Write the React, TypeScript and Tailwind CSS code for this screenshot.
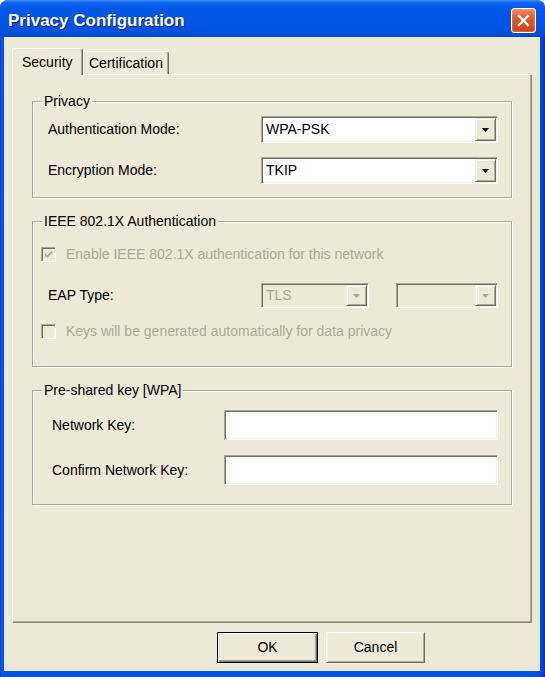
import React from 'react';

const sunken =
  'border border-t-[#aca899] border-l-[#aca899] border-r-white border-b-white shadow-[inset_1px_1px_0_#716f64,inset_-1px_-1px_0_#f1efe2]';

const DropButton: React.FC<{ disabled?: boolean }> = ({ disabled }) => (
  <div className="w-[21px] my-[1px] mr-[1px] shrink-0 bg-[#ece9d8] border border-t-[#f1efe2] border-l-[#f1efe2] border-r-[#716f64] border-b-[#716f64] shadow-[inset_1px_1px_0_#fff,inset_-1px_-1px_0_#aca899] flex items-center justify-center">
    <svg width="7" height="4" viewBox="0 0 7 4">
      <path d="M0 0h7L3.5 4z" fill={disabled ? '#aca899' : '#000'} />
    </svg>
  </div>
);

const Combo: React.FC<{ value: string; disabled?: boolean; className?: string }> = ({
  value,
  disabled,
  className = '',
}) => (
  <div
    className={`flex items-stretch ${sunken} ${
      disabled ? 'bg-[#ece9d8] text-[#aca899]' : 'bg-white text-black'
    } ${className}`}
  >
    <span className="flex-1 flex items-center pl-[4px] text-[14px]">{value}</span>
    <DropButton disabled={disabled} />
  </div>
);

const CheckBox: React.FC<{ checked?: boolean }> = ({ checked }) => (
  <div className={`w-[15px] h-[15px] shrink-0 bg-[#ece9d8] flex items-center justify-center ${sunken}`}>
    {checked && (
      <svg width="9" height="9" viewBox="0 0 9 9">
        <path d="M1 4.2l2.4 2.4L8 1.6" stroke="#aca899" strokeWidth="2" fill="none" />
      </svg>
    )}
  </div>
);

// etched group box; padding lives on the inner div so the legend stays put
const Group: React.FC<{ title: string; className?: string; inner: string; children: React.ReactNode }> = ({
  title,
  className = '',
  inner,
  children,
}) => (
  <fieldset
    className={`border border-[#aca899] shadow-[1px_1px_0_#fff,inset_1px_1px_0_#fff] ${className}`}
  >
    <legend className="ml-[9px] px-[2px] bg-[#ece9d8] text-[14px] leading-[16px] text-black">
      {title}
    </legend>
    <div className={inner}>{children}</div>
  </fieldset>
);

export default function App() {
  return (
    <div className="w-[545px] h-[677px] flex flex-col bg-[linear-gradient(to_right,#0a3fd8_0px,#0058ee_2px,#0054e3_4px,#0054e3_538px,#0046d4_542px,#0a2fc0_545px)] rounded-t-[8px] overflow-hidden font-['Liberation_Sans',Arial,sans-serif] select-none">
      {/* title bar */}
      <div className="h-[37px] shrink-0 flex items-center justify-between pl-[8px] pr-[9px] pt-[4px] bg-[linear-gradient(to_bottom,#3d8ef8_0px,#0a62ee_3px,#0058e6_8px,#0054e3_26px,#0050da_34px,#0048cc_37px)]">
        <span className="text-white font-bold text-[17px] leading-none [text-shadow:1px_1px_0_#0a1e8a]">
          Privacy Configuration
        </span>
        <div className="w-[25px] h-[25px] rounded-[3px] border border-white bg-[linear-gradient(to_bottom,#f08a62,#e25a2c_40%,#cc4317)] flex items-center justify-center shadow-[inset_0_0_2px_#ffb89a]">
          <svg width="13" height="13" viewBox="0 0 13 13">
            <path d="M2 2l9 9M11 2l-9 9" stroke="#fff" strokeWidth="2.4" strokeLinecap="square" />
          </svg>
        </div>
      </div>

      {/* body */}
      <div className="flex-1 ml-[4px] mr-[5px] mb-[6px] bg-[#ece9d8] flex flex-col px-[8px] pt-[11px]">
        {/* tabs */}
        <div className="h-[26px] flex items-end text-[14px] text-black">
          <div className="relative z-10 w-[71px] h-[27px] -mb-px bg-[#ece9d8] border-t border-l border-r border-t-white border-l-white border-r-[#716f64] rounded-t-[3px] shadow-[inset_-1px_0_0_#aca899] flex items-center pl-[9px]">
            Security
          </div>
          <div className="w-[86px] h-[23px] bg-[#ece9d8] border-t border-r border-t-white border-r-[#716f64] rounded-tr-[3px] shadow-[inset_-1px_0_0_#aca899] flex items-center pl-[6px]">
            Certification
          </div>
        </div>

        {/* panel */}
        <div className="h-[549px] shrink-0 border border-t-white border-l-white border-r-[#8d8a7c] border-b-[#8d8a7c] shadow-[inset_-1px_-1px_0_#aca899] px-[19px] pt-[18px] flex flex-col text-[14px] text-black">
          <Group title="Privacy" inner="flex flex-col gap-[14px] pl-[15px] pr-[13px] pt-[7px] pb-[13px]">
            <div className="flex items-center">
              <span className="w-[213px]">Authentication Mode:</span>
              <Combo value="WPA-PSK" className="flex-1 h-[27px]" />
            </div>
            <div className="flex items-center">
              <span className="w-[213px]">Encryption Mode:</span>
              <Combo value="TKIP" className="flex-1 h-[27px]" />
            </div>
          </Group>

          <Group
            title="IEEE 802.1X Authentication"
            className="mt-[15px]"
            inner="pl-[8px] pr-[13px] pt-[18px] pb-[27px]"
          >
            <div className="h-[15px] flex items-center gap-[10px] text-[#aca899]">
              <CheckBox checked />
              <span className="leading-[15px]">Enable IEEE 802.1X authentication for this network</span>
            </div>
            <div className="h-[25px] flex items-center mt-[21px] pl-[7px]">
              <span className="w-[213px]">EAP Type:</span>
              <Combo value="TLS" disabled className="w-[108px] h-[25px]" />
              <Combo value="" disabled className="ml-[27px] flex-1 h-[25px]" />
            </div>
            <div className="h-[15px] flex items-center gap-[10px] mt-[16px] text-[#aca899]">
              <CheckBox />
              <span className="leading-[15px]">Keys will be generated automatically for data privacy</span>
            </div>
          </Group>

          <Group
            title="Pre-shared key [WPA]"
            className="mt-[15px]"
            inner="flex flex-col gap-[15px] pl-[19px] pr-[13px] pt-[12px] pb-[19px]"
          >
            <div className="flex items-center">
              <span className="w-[172px]">Network Key:</span>
              <div className={`flex-1 h-[30px] bg-white ${sunken}`} />
            </div>
            <div className="flex items-center">
              <span className="w-[172px]">Confirm Network Key:</span>
              <div className={`flex-1 h-[30px] bg-white ${sunken}`} />
            </div>
          </Group>
        </div>

        {/* buttons */}
        <div className="flex mt-[9px] ml-[205px] gap-[8px] text-[14px] text-black">
          <button className="w-[101px] h-[31px] border border-black bg-[#ece9d8] shadow-[inset_1px_1px_0_#fff,inset_-1px_-1px_0_#716f64,inset_-2px_-2px_0_#aca899]">
            OK
          </button>
          <button className="w-[99px] h-[31px] border border-t-white border-l-white border-r-[#716f64] border-b-[#716f64] bg-[#ece9d8] shadow-[inset_1px_1px_0_#f1efe2,inset_-1px_-1px_0_#aca899]">
            Cancel
          </button>
        </div>
      </div>
    </div>
  );
}
